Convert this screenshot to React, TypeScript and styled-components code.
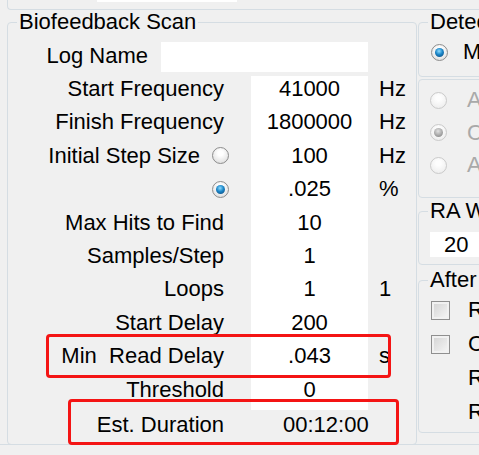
import React from "react";
import styled, { createGlobalStyle } from "styled-components";

const LINE = "#d5dde3";

const GlobalStyle = createGlobalStyle`
  html, body {
    margin: 0;
    padding: 0;
    background: #f0f0f0;
  }
  body {
    font-family: "Liberation Sans", Arial, sans-serif;
    color: #000;
  }
`;

const Page = styled.div`
  position: relative;
  width: 479px;
  height: 455px;
  overflow: hidden;
  background: #f0f0f0;
  font-size: 22px;
`;

const TopPanel = styled.div`
  box-sizing: border-box;
  height: 10px;
  margin-left: 7px;
  border-left: 1px solid ${LINE};
  border-bottom: 1px solid ${LINE};
  border-bottom-left-radius: 4px;
`;

const TopField = styled.div`
  width: 140px;
  height: 2px;
  margin-left: 89px;
  background: #fff;
`;

const Main = styled.div`
  display: flex;
  align-items: flex-start;
  margin-top: 12px;
  padding-left: 7px;
`;

const GroupBox = styled.div`
  position: relative;
  box-sizing: border-box;
  border: 1px solid ${LINE};
  border-radius: 4px;
`;

const Title = styled.div`
  position: absolute;
  top: -13px;
  left: 9px;
  padding: 0 2px;
  line-height: 24px;
  white-space: nowrap;
  background: #f0f0f0;
`;

const ScanBox = styled(GroupBox)`
  flex: none;
  width: 410px;
  height: 423px;
  padding-top: 19px;
`;

const LogRow = styled.div`
  display: flex;
  align-items: center;
  gap: 13px;
  height: 30px;
`;

const LogLabel = styled.div`
  width: 140px;
  text-align: right;
  line-height: 24px;
  padding-bottom: 3px;
`;

const TextBox = styled.div<{ $width: number }>`
  box-sizing: border-box;
  width: ${(p) => p.$width}px;
  height: 100%;
  background: #fff;
`;

const Form = styled.div`
  display: grid;
  grid-template-columns: 243px 117px 1fr;
  grid-auto-rows: 33.4px;
  margin-top: 4px;
`;

const Label = styled.div<{ $radio?: boolean }>`
  display: flex;
  justify-content: flex-end;
  align-items: center;
  gap: 12px;
  height: 26px;
  line-height: 26px;
  padding-right: ${(p) => (p.$radio ? 22 : 27)}px;
  white-space: nowrap;
`;

const Value = styled.div`
  background: #fff;
  text-align: center;
  line-height: 26px;
`;

const Unit = styled.div`
  padding-left: 11px;
  line-height: 26px;
`;

const Duration = styled.div`
  grid-column: 2 / 4;
  padding: 2px 0 0 32px;
  line-height: 26px;
`;

const EstLabel = styled(Label)`
  padding-top: 2px;
`;

const Radio = styled.span<{ $checked?: boolean; $disabled?: boolean }>`
  flex: none;
  position: relative;
  box-sizing: border-box;
  width: 17px;
  height: 17px;
  border-radius: 50%;
  border: 1px solid ${(p) => (p.$disabled ? "#cacaca" : "#8d8d8d")};
  background: ${(p) =>
    p.$disabled
      ? "radial-gradient(circle at 50% 35%, #fdfdfd 20%, #e9e9e9 100%)"
      : "radial-gradient(circle at 50% 35%, #ffffff 20%, #d6d6d6 100%)"};

  &::after {
    content: "";
    display: ${(p) => (p.$checked ? "block" : "none")};
    position: absolute;
    left: 3px;
    top: 3px;
    width: 9px;
    height: 9px;
    border-radius: 50%;
    background: ${(p) =>
      p.$disabled
        ? "radial-gradient(circle at 45% 35%, #e2e2e2 0%, #a2a2a2 60%, #7f7f7f 100%)"
        : "radial-gradient(circle at 45% 35%, #8fdcff 0%, #1b86c8 45%, #0c3f70 100%)"};
  }
`;

const CheckBox = styled.span`
  flex: none;
  box-sizing: border-box;
  width: 19px;
  height: 19px;
  border: 1px solid #8f8f8f;
  background: linear-gradient(135deg, #d2d2d2, #f7f7f7);
  box-shadow: inset 0 0 0 2px #f1f1f1;
`;

const RightColumn = styled.div`
  flex: none;
  display: flex;
  flex-direction: column;
  width: 110px;
  margin-left: 1px;
`;

const DetectBox = styled(GroupBox)`
  height: 55px;
  padding: 16px 0 0 12px;
`;

const ModeBox = styled(GroupBox)`
  height: 119px;
  margin-top: 2px;
  padding: 4px 0 0 11px;
`;

const WindowBox = styled(GroupBox)`
  height: 54px;
  margin-top: 13px;
  padding: 20px 0 0 11px;
`;

const AfterBox = styled(GroupBox)`
  height: 153px;
  margin-top: 15px;
  padding: 12px 0 0 12px;
`;

const OptionRow = styled.div<{ $gap: number; $height: number; $disabled?: boolean }>`
  display: flex;
  align-items: center;
  gap: ${(p) => p.$gap}px;
  height: ${(p) => p.$height}px;
  line-height: 26px;
  white-space: nowrap;
  color: ${(p) => (p.$disabled ? "#a9a9a9" : "#000")};
`;

const PlainRow = styled.div`
  height: 34px;
  padding-left: 37px;
  line-height: 34px;
  white-space: nowrap;
`;

const SmallInput = styled.div`
  box-sizing: border-box;
  height: 25px;
  padding-left: 14px;
  line-height: 25px;
  background: #fff;
`;

const Footer = styled.div`
  margin-top: -1px;
  border-top: 1px solid ${LINE};
  height: 10px;
`;

const Highlight = styled.div<{ $left: number; $top: number; $w: number; $h: number }>`
  position: absolute;
  left: ${(p) => p.$left}px;
  top: ${(p) => p.$top}px;
  width: ${(p) => p.$w}px;
  height: ${(p) => p.$h}px;
  box-sizing: border-box;
  border: 3px solid #f41414;
  border-radius: 4px;
  pointer-events: none;
`;

type Row = { label: string; value: string; unit?: string; radio?: "off" | "on" };

const rows: Row[] = [
  { label: "Start Frequency", value: "41000", unit: "Hz" },
  { label: "Finish Frequency", value: "1800000", unit: "Hz" },
  { label: "Initial Step Size", value: "100", unit: "Hz", radio: "off" },
  { label: "", value: ".025", unit: "%", radio: "on" },
  { label: "Max Hits to Find", value: "10" },
  { label: "Samples/Step", value: "1" },
  { label: "Loops", value: "1", unit: "1" },
  { label: "Start Delay", value: "200" },
  { label: "Min\u00a0 Read Delay", value: ".043", unit: "s" },
  { label: "Threshold", value: "0" },
];

export default function App() {
  return (
    <Page>
      <GlobalStyle />
      <TopPanel>
        <TopField />
      </TopPanel>
      <Main>
        <ScanBox>
          <Title>Biofeedback Scan</Title>
          <LogRow>
            <LogLabel>Log Name</LogLabel>
            <TextBox $width={207} />
          </LogRow>
          <Form>
            {rows.map((r, i) => (
              <React.Fragment key={i}>
                <Label $radio={!!r.radio}>
                  {r.label && <span>{r.label}</span>}
                  {r.radio && <Radio $checked={r.radio === "on"} />}
                </Label>
                <Value>{r.value}</Value>
                <Unit>{r.unit}</Unit>
              </React.Fragment>
            ))}
            <EstLabel>Est. Duration</EstLabel>
            <Duration>00:12:00</Duration>
          </Form>
        </ScanBox>
        <RightColumn>
          <DetectBox>
            <Title>Detection</Title>
            <OptionRow $gap={15} $height={26}>
              <Radio $checked />
              <span>Manual</span>
            </OptionRow>
          </DetectBox>
          <ModeBox>
            <OptionRow $gap={20} $height={32.5} $disabled>
              <Radio $disabled />
              <span>Auto</span>
            </OptionRow>
            <OptionRow $gap={20} $height={32.5} $disabled>
              <Radio $disabled $checked />
              <span>Continuous</span>
            </OptionRow>
            <OptionRow $gap={20} $height={32.5} $disabled>
              <Radio $disabled />
              <span>Average</span>
            </OptionRow>
          </ModeBox>
          <WindowBox>
            <Title>RA Window</Title>
            <SmallInput>20</SmallInput>
          </WindowBox>
          <AfterBox>
            <Title>After Scan</Title>
            <OptionRow $gap={18} $height={34}>
              <CheckBox />
              <span>Repeat</span>
            </OptionRow>
            <OptionRow $gap={18} $height={34}>
              <CheckBox />
              <span>Clear</span>
            </OptionRow>
            <PlainRow>Run</PlainRow>
            <PlainRow>Reset</PlainRow>
          </AfterBox>
        </RightColumn>
      </Main>
      <Footer />
      <Highlight $left={46} $top={334} $w={345} $h={44} />
      <Highlight $left={68} $top={399} $w={331} $h={46} />
    </Page>
  );
}
